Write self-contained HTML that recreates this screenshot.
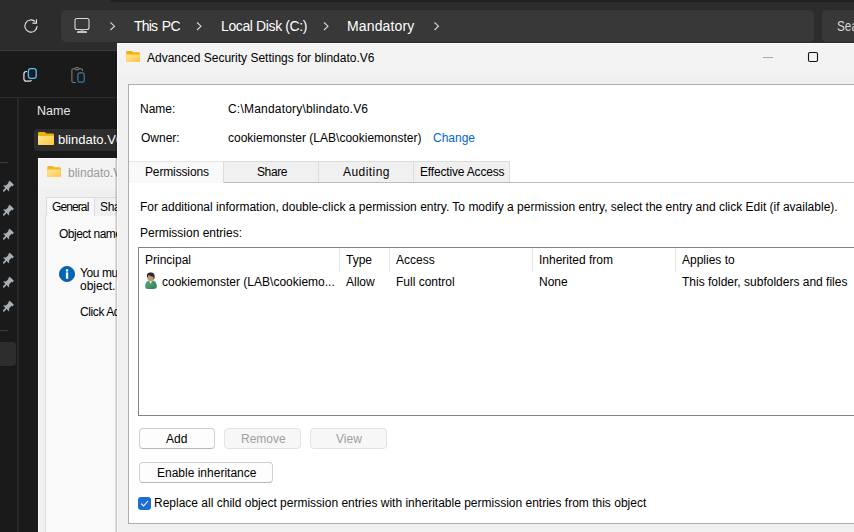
<!DOCTYPE html>
<html><head><meta charset="utf-8">
<style>
*{margin:0;padding:0;box-sizing:border-box}
html,body{width:854px;height:532px;overflow:hidden;background:#1a1a1a;font-family:"Liberation Sans",sans-serif;position:relative}
.a{position:absolute}
.t{position:absolute;white-space:nowrap;font-size:12px;line-height:15px;color:#000}
.w{color:#fff}
svg{position:absolute;overflow:visible}
</style></head><body>

<!-- ===== Explorer top bar ===== -->
<div class="a" style="left:0;top:0;width:854px;height:50px;background:#2c2c2c"></div>
<div class="a" style="left:110px;top:-6px;width:760px;height:8px;background:#202020;border-bottom-left-radius:4px"></div>
<div class="a" style="left:0;top:50px;width:854px;height:1px;background:#3a3a3a"></div>
<!-- refresh -->
<svg style="left:0;top:0" width="60" height="50">
  <path d="M35.3 21.7 A6.1 6.1 0 1 0 37.1 26" fill="none" stroke="#e8e8e8" stroke-width="1.1"/>
  <path d="M32.4 23.1 H36.5 V19.2" fill="none" stroke="#e8e8e8" stroke-width="1.1"/>
</svg>
<!-- address -->
<div class="a" style="left:61px;top:10px;width:753px;height:32px;background:#383838;border-radius:5px"></div>
<div class="a" style="left:822px;top:10px;width:60px;height:32px;background:#383838;border-radius:5px"></div>
<svg style="left:0;top:0" width="854" height="50">
  <rect x="75" y="18.5" width="14" height="11" rx="2" fill="none" stroke="#d8d8d8" stroke-width="1.1"/>
  <path d="M77.4 30.9 H86.6 L87 32.9 H77 Z" fill="#c8c8c8"/><path d="M80.6 29.6 H83.4 V31.2 H80.6 Z" fill="#9a9a9a"/>
  <path d="M110.5 22.5 L114.5 26.2 L110.5 30" fill="none" stroke="#d8d8d8" stroke-width="1.1"/>
  <path d="M197 22.5 L201 26.2 L197 30" fill="none" stroke="#d8d8d8" stroke-width="1.1"/>
  <path d="M324 22.5 L328 26.2 L324 30" fill="none" stroke="#d8d8d8" stroke-width="1.1"/>
  <path d="M434.5 22.5 L438.5 26.2 L434.5 30" fill="none" stroke="#d8d8d8" stroke-width="1.1"/>
</svg>
<div class="t w" style="left:134px;top:18px;font-size:14px;line-height:17px;letter-spacing:-0.8px;word-spacing:1.5px">This PC</div>
<div class="t w" style="left:221px;top:18px;font-size:14px;line-height:17px;letter-spacing:-0.38px">Local Disk (C:)</div>
<div class="t w" style="left:347px;top:18px;font-size:14px;line-height:17px;letter-spacing:0.15px">Mandatory</div>
<div class="t" style="left:837px;top:18px;font-size:14px;line-height:17px;color:#d6d6d6;transform:scaleX(0.84);transform-origin:0 0">Search</div>

<!-- ===== command bar ===== -->
<svg style="left:0;top:0" width="120" height="100">
  <path d="M27 71.5 H26.4 A2.5 2.5 0 0 0 23.9 74 V78.7 A2.5 2.5 0 0 0 26.4 81.2 H29.4 A2.2 2.2 0 0 0 31.4 80" fill="none" stroke="#e6e6e6" stroke-width="1.2"/>
  <rect x="28.4" y="68.6" width="7.8" height="9.8" rx="2.4" fill="none" stroke="#4cc2ff" stroke-width="1.3"/>
  <path d="M74.8 68.8 H73.4 A1.5 1.5 0 0 0 71.9 70.3 V81 A1.5 1.5 0 0 0 73.4 82.5 H76 M79 68.8 H81 A1.5 1.5 0 0 1 82.5 70.3 V71" fill="none" stroke="#7a7a7a" stroke-width="1.1"/>
  <ellipse cx="76.9" cy="68.7" rx="2.2" ry="1.2" fill="none" stroke="#7a7a7a" stroke-width="1.1"/>
  <rect x="77.9" y="72.9" width="6.3" height="9.3" rx="1.8" fill="none" stroke="#3b7ca8" stroke-width="1.2"/>
</svg>
<div class="a" style="left:0;top:97px;width:117px;height:1px;background:#2b2b2b"></div>
<div class="a" style="left:17px;top:98px;width:2px;height:440px;background:#282828"></div>
<div class="t" style="left:37px;top:104px;color:#e6e6e6;font-size:12.5px">Name</div>

<!-- selected row -->
<div class="a" style="left:34px;top:129px;width:100px;height:22px;background:#2d2d2d;border-radius:4px"></div>
<svg style="left:0;top:0" width="0" height="0">
  <defs>
    <linearGradient id="fg" x1="0" y1="0" x2="1" y2="1">
      <stop offset="0" stop-color="#ffe799"/><stop offset="1" stop-color="#ffc63a"/>
    </linearGradient>
    <symbol id="folder" viewBox="0 0 16 13">
      <path d="M0 1.3 Q0 0 1.3 0 H6.8 L8.3 1.6 H14.7 Q16 1.6 16 2.9 V11.7 Q16 13 14.7 13 H1.3 Q0 13 0 11.7 Z" fill="#f4b10a"/>
      <rect x="0" y="4" width="16" height="9" rx="1.1" fill="url(#fg)"/>
    </symbol>
  </defs>
</svg>
<svg style="left:38px;top:132px" width="16" height="13"><use href="#folder" width="16" height="13"/></svg>
<div class="t w" style="left:58px;top:132px;font-size:13px">blindato.V6</div>

<!-- left nav -->
<div class="a" style="left:0;top:162px;width:8px;height:1px;background:#3a3a3a"></div>
<div class="a" style="left:0;top:330px;width:8px;height:1px;background:#3a3a3a"></div>
<div class="a" style="left:-4px;top:342px;width:20px;height:24px;background:#2d2d2d;border-radius:4px"></div>
<svg style="left:0;top:0" width="20" height="330">
  <defs>
    <g id="pin">
      <g transform="translate(10.6,2.4) rotate(45)">
        <rect x="-3" y="-1" width="6" height="2.4" rx="0.8" fill="#a9b1b8"/>
        <rect x="-2.1" y="1" width="4.2" height="4.4" fill="#a9b1b8"/>
        <path d="M-4.4 7.2 L-2.1 5 H2.1 L4.4 7.2 Z" fill="#a9b1b8"/>
        <rect x="-0.8" y="7" width="1.6" height="4.2" rx="0.7" fill="#a9b1b8"/>
      </g>
    </g>
  </defs>
  <use href="#pin" x="0.5" y="181"/>
  <use href="#pin" x="0.5" y="205"/>
  <use href="#pin" x="0.5" y="229"/>
  <use href="#pin" x="0.5" y="253"/>
  <use href="#pin" x="0.5" y="277"/>
  <use href="#pin" x="0.5" y="301"/>
</svg>

<!-- ===== background Properties window ===== -->
<div class="a" style="left:38px;top:158px;width:90px;height:380px;background:#f0f0f0;border:1px solid #fafafa"></div>
<div class="a" style="left:39px;top:159px;width:90px;height:29px;background:#f3f3f3"></div>
<svg style="left:47px;top:166px;opacity:.9" width="14" height="11"><use href="#folder" width="14" height="11"/></svg>
<div class="t" style="left:68px;top:166px;color:#9a9a9a">blindato.V6 Properties</div>
<div class="a" style="left:45px;top:215px;width:90px;height:330px;background:#f9f9f9;border:1px solid #dcdcdc"></div>
<div class="a" style="left:46px;top:197px;width:49px;height:19px;background:#f9f9f9;border:1px solid #dcdcdc;border-bottom:none"></div>
<div class="a" style="left:94px;top:197px;width:40px;height:19px;background:#f0f0f0;border:1px solid #dcdcdc;border-bottom:none"></div>
<div class="t" style="left:52px;top:200px;letter-spacing:-0.9px">General</div>
<div class="t" style="left:100px;top:200px;letter-spacing:-0.3px">Sharing</div>
<div class="t" style="left:59px;top:227px;letter-spacing:-0.5px">Object name:</div>
<svg style="left:0;top:0" width="120" height="300">
  <circle cx="67" cy="274" r="7.6" fill="#0067b8" stroke="#0a4f8c" stroke-width="0.8"/>
  <rect x="65.9" y="272.4" width="2.3" height="6.4" fill="#fff"/>
  <rect x="65.9" y="269.3" width="2.3" height="2.2" fill="#fff"/>
</svg>
<div class="t" style="left:80px;top:266px;letter-spacing:-0.4px">You must have</div>
<div class="t" style="left:80px;top:279px">object.</div>
<div class="t" style="left:80px;top:305px;letter-spacing:-0.4px">Click Advanced</div>

<!-- shadow of main dialog -->
<div class="a" style="left:115px;top:51px;width:2px;height:500px;background:linear-gradient(to right,rgba(0,0,0,0.06),rgba(0,0,0,.24))"></div>

<!-- ===== Advanced Security Settings dialog ===== -->
<div class="a" style="left:117px;top:43px;width:760px;height:500px;background:#f0f0f0;border-left:1px solid #fafafa;border-top:1px solid #fafafa"></div>
<div class="a" style="left:118px;top:44px;width:760px;height:29px;background:#f3f3f3"></div>
<svg style="left:0;top:0" width="854" height="80">
  <path d="M763 57.5 H773" stroke="#a8a8a8" stroke-width="1"/>
  <rect x="808.5" y="52.5" width="9" height="9" rx="1.5" fill="none" stroke="#111" stroke-width="1.1"/>
</svg>
<svg style="left:126px;top:51px" width="14" height="11"><use href="#folder" width="14" height="11"/></svg>
<div class="t" style="left:147px;top:51px">Advanced Security Settings for blindato.V6</div>

<!-- white panel -->
<div class="a" style="left:128px;top:84px;width:760px;height:440px;background:#fff;border:1px solid #adadad"></div>
<div class="t" style="left:140px;top:102px">Name:</div>
<div class="t" style="left:228px;top:102px;letter-spacing:0.2px">C:\Mandatory\blindato.V6</div>
<div class="t" style="left:141px;top:131px">Owner:</div>
<div class="t" style="left:228px;top:131px">cookiemonster (LAB\cookiemonster)</div>
<div class="t" style="left:433px;top:131px;color:#0066cc">Change</div>

<!-- tabs -->
<div class="a" style="left:129px;top:161px;width:95px;height:22px;background:#f9f9f9;border-top:1px solid #e6e6e6"></div>
<div class="a" style="left:223px;top:161px;width:96px;height:22px;background:#f0f0f0;border:1px solid #dcdcdc;border-bottom:none"></div>
<div class="a" style="left:318px;top:161px;width:96px;height:22px;background:#f0f0f0;border:1px solid #dcdcdc;border-bottom:none"></div>
<div class="a" style="left:413px;top:161px;width:97px;height:22px;background:#f0f0f0;border:1px solid #dcdcdc;border-bottom:none"></div>
<div class="a" style="left:224px;top:182px;width:640px;height:1px;background:#bdbdbd"></div>
<div class="t" style="left:145px;top:165px;letter-spacing:-0.14px">Permissions</div>
<div class="t" style="left:257px;top:165px;letter-spacing:-0.4px">Share</div>
<div class="t" style="left:343px;top:165px;letter-spacing:0.45px">Auditing</div>
<div class="t" style="left:420px;top:165px;letter-spacing:-0.17px">Effective Access</div>

<div class="t" style="left:140px;top:200px">For additional information, double-click a permission entry. To modify a permission entry, select the entry and click Edit (if available).</div>
<div class="t" style="left:140px;top:226px">Permission entries:</div>

<!-- list -->
<div class="a" style="left:138px;top:247px;width:760px;height:169px;background:#fff;border:1px solid #828282"></div>
<div class="a" style="left:339px;top:248px;width:1px;height:24px;background:#e5e5e5"></div>
<div class="a" style="left:389px;top:248px;width:1px;height:24px;background:#e5e5e5"></div>
<div class="a" style="left:532px;top:248px;width:1px;height:24px;background:#e5e5e5"></div>
<div class="a" style="left:675px;top:248px;width:1px;height:24px;background:#e5e5e5"></div>
<div class="t" style="left:145px;top:253px">Principal</div>
<div class="t" style="left:346px;top:253px">Type</div>
<div class="t" style="left:396px;top:253px">Access</div>
<div class="t" style="left:539px;top:253px">Inherited from</div>
<div class="t" style="left:682px;top:253px">Applies to</div>
<svg style="left:0;top:0" width="200" height="300">
  <defs><linearGradient id="ug" x1="0" y1="0" x2="1" y2="1"><stop offset="0" stop-color="#5aac7e"/><stop offset="1" stop-color="#2f7d55"/></linearGradient></defs>
  <path d="M145.2 286.6 C145 283 146.8 281 149.6 280.6 L153.4 280.6 C155.6 281.2 156.8 283.4 156.8 286.6 C156.8 288.6 155.4 289 153.6 289 L147.6 289 C146 289 145.2 288 145.2 286.6 Z" fill="url(#ug)"/>
  <path d="M149.2 280.8 L150.6 284.2 L152 280.8 Z" fill="#dbeef6"/>
  <ellipse cx="150.5" cy="277.2" rx="3.2" ry="3.9" fill="#c8966c"/>
  <path d="M147 277.2 C146.4 273.6 148.2 272.6 150.6 272.6 C153.4 272.6 155 274 154.6 277.4 C154.4 278.6 154 279.4 153.4 279.8 L153.2 276.8 C151.6 276.4 149.4 275.6 148.2 275 L147.8 277.6 Z" fill="#2d2d2d"/>
</svg>
<div class="t" style="left:162px;top:275px">cookiemonster (LAB\cookiemo...</div>
<div class="t" style="left:346px;top:275px">Allow</div>
<div class="t" style="left:396px;top:275px">Full control</div>
<div class="t" style="left:539px;top:275px">None</div>
<div class="t" style="left:682px;top:275px">This folder, subfolders and files</div>

<!-- buttons -->
<div class="a" style="left:139px;top:428px;width:76px;height:21px;background:#fdfdfd;border:1px solid #d0d0d0;border-bottom-color:#b8b8b8;border-radius:4px"></div>
<div class="a" style="left:224px;top:428px;width:77px;height:21px;background:#f7f7f7;border:1px solid #e3e3e3;border-radius:4px"></div>
<div class="a" style="left:310px;top:428px;width:77px;height:21px;background:#f7f7f7;border:1px solid #e3e3e3;border-radius:4px"></div>
<div class="a" style="left:139px;top:462px;width:134px;height:21px;background:#fdfdfd;border:1px solid #d0d0d0;border-bottom-color:#b8b8b8;border-radius:4px"></div>
<div class="t" style="left:166px;top:432px">Add</div>
<div class="t" style="left:241px;top:432px;color:#a0a0a0">Remove</div>
<div class="t" style="left:336px;top:432px;color:#a0a0a0">View</div>
<div class="t" style="left:157px;top:466px">Enable inheritance</div>

<!-- checkbox -->
<div class="a" style="left:138px;top:497px;width:13px;height:13px;background:#1b6ed2;border-radius:3px"></div>
<svg style="left:0;top:0" width="200" height="520">
  <path d="M141.2 503.6 L143.6 506 L148 501" fill="none" stroke="#fff" stroke-width="1.1"/>
</svg>
<div class="t" style="left:154px;top:496px">Replace all child object permission entries with inheritable permission entries from this object</div>

</body></html>
